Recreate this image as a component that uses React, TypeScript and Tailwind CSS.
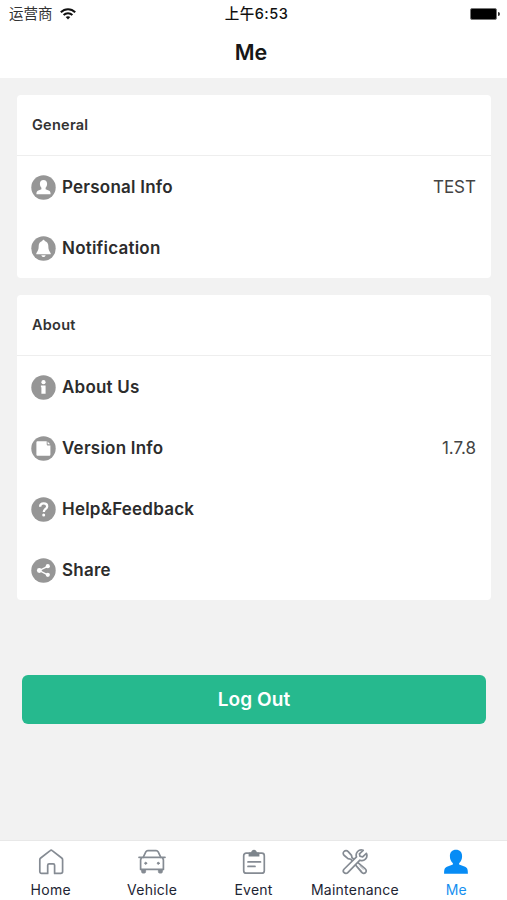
import React from 'react';

interface RowProps {
  icon: React.ReactNode;
  label: string;
  value?: string;
}

interface SectionProps {
  title: string;
  children: React.ReactNode;
}

interface TabProps {
  icon: React.ReactNode;
  label: string;
  active?: boolean;
}

const RoundIcon = ({ children }: { children: React.ReactNode }) => (
  <svg width="25" height="25" viewBox="0 0 25 25" fill="none" className="mt-px shrink-0">
    <circle cx="12.5" cy="12.5" r="12.2" fill="#969696" />
    {children}
  </svg>
);

const PersonIcon = () => (
  <RoundIcon>
    <path d="M12.5 5c-2.3 0-3.6 1.6-3.6 3.8 0 1.8.6 3.1 1.5 3.9v1.5l-3.6 1.5c-1 .5-1.4 1.3-1.4 3.6h14.2c0-2.3-.4-3.1-1.4-3.6l-3.6-1.5v-1.5c.9-.8 1.5-2.1 1.5-3.9 0-2.2-1.3-3.8-3.6-3.8Z" fill="#fff" />
  </RoundIcon>
);

const BellIcon = () => (
  <RoundIcon>
    <path d="M12.5 3.8c-.7 0-1.1.4-1.2 1.1-2.3.6-3.6 2.4-3.6 4.9 0 3.6-.8 5.3-2.4 7.4v1h14.4v-1c-1.6-2.1-2.4-3.8-2.4-7.4 0-2.5-1.3-4.3-3.6-4.9-.1-.7-.5-1.1-1.2-1.1Z" fill="#fff" />
    <path d="M10.4 19.2h4.2c-.2 1.2-1 1.8-2.1 1.8s-1.9-.6-2.1-1.8Z" fill="#fff" />
  </RoundIcon>
);

const InfoIcon = () => (
  <RoundIcon>
    <circle cx="12.5" cy="7.2" r="2.1" fill="#fff" />
    <path d="M9.9 10.6h4.7v8.2h-4.2v-6.5h-.5v-1.7Z" fill="#fff" />
  </RoundIcon>
);

const PageIcon = () => (
  <RoundIcon>
    <path d="M6.8 5.3h8.9v2.6c0 1 .5 1.5 1.5 1.5h2.2v9c0 .9-.5 1.4-1.4 1.4H6.8c-.9 0-1.4-.5-1.4-1.4V6.7c0-.9.5-1.4 1.4-1.4Z" fill="#fff" />
    <path d="m16.6 5.6 2.5 2.6h-2.5V5.6Z" fill="#fff" />
  </RoundIcon>
);

const QuestionIcon = () => (
  <RoundIcon>
    <path d="M9.1 9.8c0-2.2 1.4-3.4 3.6-3.4s3.5 1.2 3.5 3c0 2.5-3.4 2.6-3.4 5.5" stroke="#fff" strokeWidth="2.3" />
    <circle cx="12.7" cy="18.1" r="1.5" fill="#fff" />
  </RoundIcon>
);

const ShareIcon = () => (
  <RoundIcon>
    <path d="m16.7 8.3-8.3 4.2 8.3 4.3" stroke="#fff" strokeWidth="1.4" />
    <circle cx="8.3" cy="12.5" r="2.4" fill="#fff" />
    <circle cx="16.8" cy="8.2" r="2.1" fill="#fff" />
    <circle cx="16.8" cy="16.8" r="2.1" fill="#fff" />
  </RoundIcon>
);

const TabSvg = ({ children }: { children: React.ReactNode }) => (
  <svg width="28" height="26" viewBox="0 0 28 26" fill="none" stroke="#858b93" strokeWidth="1.7" strokeLinecap="round" strokeLinejoin="round">
    {children}
  </svg>
);

const HomeIcon = () => (
  <TabSvg>
    <path d="M13.2 1.6c.6-.5 1.4-.5 2 0l9.5 7.4c.6.5.9 1 .9 1.8v11.8c0 1.1-.7 1.8-1.8 1.8h-6.2v-8.1c0-.9-.5-1.4-1.4-1.4h-4.1c-.9 0-1.4.5-1.4 1.4v8.1H4.6c-1.1 0-1.8-.7-1.8-1.8V10.8c0-.8.3-1.3.9-1.8l9.5-7.4Z" />
  </TabSvg>
);

const VehicleIcon = () => (
  <TabSvg>
    <path d="m5.2 8.3 2.6-5.4c.5-.9 1.1-1.3 2-1.3h8.4c.9 0 1.5.4 2 1.3l2.6 5.4M1 8.3h2.5M24.5 8.3H27" />
    <path d="M4.8 8.3h18.4c1.5.5 2.2 1.5 2.2 3v9.1H2.6v-9.1c0-1.5.7-2.5 2.2-3Z" />
    <path d="M3.600 20.8h4v1.900c0 .9-.5 1.400-1.300 1.400H4.900c-.8 0-1.300-.5-1.300-1.400v-1.900ZM20.400 20.8h4v1.900c0 .9-.5 1.400-1.300 1.400h-1.400c-.8 0-1.300-.5-1.300-1.400v-1.900Z" fill="#858b93" strokeWidth=".8" />
    <circle cx="7.7" cy="14.3" r="1" fill="#858b93" strokeWidth="1" />
    <circle cx="20.3" cy="14.3" r="1" fill="#858b93" strokeWidth="1" />
  </TabSvg>
);

const EventIcon = () => (
  <TabSvg>
    <rect x="3.7" y="4.2" width="20.6" height="20" rx="2.5" />
    <path d="M8.6 7.4V5c0-.9.6-1.4 1.5-1.4h1C11.5 1.8 12.5.8 14 .8s2.5 1 2.9 2.8h1c.9 0 1.5.5 1.5 1.4v2.4H8.6Z" fill="#7d858c" stroke="none" />
    <path d="M8 12.9h12.5M8 17.4h7" />
  </TabSvg>
);

const MaintenanceIcon = () => (
  <TabSvg>
    <path d="M3 2.5c1.2-1.2 2.9-1.2 4.2.1l3.3 3.8.5 2.3 13 10.9c1.5 1.3 1.6 2.9.5 4s-2.7 1-4-.5L9.8 10.3 7 9.6 3.3 6.5C1.9 5.3 1.9 3.6 3 2.5Z" />
    <path d="M22.2 1.3c-2-.7-4.2-.2-5.6 1.2-1.4 1.5-1.8 3.5-1.1 5.4L3.2 20c-1.1 1.1-1.1 2.7-.1 3.7s2.6 1 3.7-.1L18.9 11.2c2 .8 4.1.3 5.5-1.1 1.5-1.5 1.9-3.7 1-5.7l-3.7 3.5-2.7-.7-.6-2.4 3.8-3.5Z" fill="#fff" />
    <path d="m18.7 17 3.5 3.5M17.2 18.5l3.5 3.5" strokeWidth=".6" />
  </TabSvg>
);

const MeIcon = () => (
  <svg width="28" height="26" viewBox="0 0 28 26" fill="#078cf5">
    <path d="M14 .8c-3.9 0-6.1 2.5-6.1 6.2 0 3 .9 5.5 3 7.2v1.4l-6 2.2c-2.3 1-2.8 2.7-2.8 7h23.8c0-4.3-.5-6-2.8-7l-6-2.2v-1.4c2.1-1.700 3-4.200 3-7.200 0-3.700-2.200-6.200-6.100-6.200Z" />
  </svg>
);

const Row = ({ icon, label, value }: RowProps) => (
  <div className="flex h-[61px] items-center pr-[15px] pl-[14px]">
    {icon}
    <span className="ml-[6px] pt-[2px] text-[17px] font-semibold tracking-[0.22px] text-[#2c2c2c]">{label}</span>
    {value && <span className="ml-auto pt-[2px] text-[17px] text-[#444]">{value}</span>}
  </div>
);

const Section = ({ title, children }: SectionProps) => (
  <section className="rounded-[4px] bg-white">
    <div className="flex h-[61px] items-center border-b border-[#eee] pl-[15px]">
      <h2 className="text-[14.5px] font-semibold tracking-[0.25px] text-[#333]">{title}</h2>
    </div>
    {children}
  </section>
);

const Tab = ({ icon, label, active }: TabProps) => (
  <div className={`flex flex-1 flex-col items-center pt-[8px] ${active ? 'text-[#168ff0]' : 'text-[#1d2433]'}`}>
    {icon}
    <span className="mt-[5px] text-[14px] leading-5 tracking-[0.25px]">{label}</span>
  </div>
);

const App = () => {
  return (
    <div className="flex h-[900px] w-[507px] flex-col overflow-hidden bg-[#f2f2f2] font-['Inter','Noto_Sans_CJK_SC',sans-serif]">
      <header className="h-[78px] bg-white">
        <div className="grid h-[28px] grid-cols-3 items-center pr-[7px] pl-[9px] text-[14.5px] leading-none text-[#111]">
          <div className="flex items-center gap-[7px]">
            <span className="text-[#333]">运营商</span>
            <svg width="16" height="12" viewBox="0 0 16 12" fill="none" stroke="#111" strokeWidth="2">
              <path d="M.8 4.3C4.9.2 11.1.2 15.2 4.3M3.6 7c2.5-2.4 6.3-2.4 8.8 0" />
              <path d="M5.7 9.1c1.4-1.2 3.2-1.2 4.6 0L8 11.5 5.7 9.1Z" fill="#111" stroke="none" />
            </svg>
          </div>
          <span className="pl-[4px] text-center font-medium tracking-[0.5px]">上午6:53</span>
          <div className="flex items-center justify-end gap-px">
            <span className="h-[12px] w-[27px] rounded-[2px] border border-[#777] bg-black" />
            <span className="h-[4px] w-[2px] rounded-r-full bg-[#333]" />
          </div>
        </div>
        <h1 className="flex h-[48px] items-center justify-center pr-[5px] text-[21.5px] font-semibold text-[#171717]">Me</h1>
      </header>

      <main className="flex flex-1 flex-col gap-[17px] pt-[17px] pr-[16px] pl-[17px]">
        <Section title="General">
          <Row icon={<PersonIcon />} label="Personal Info" value="TEST" />
          <Row icon={<BellIcon />} label="Notification" />
        </Section>
        <Section title="About">
          <Row icon={<InfoIcon />} label="About Us" />
          <Row icon={<PageIcon />} label="Version Info" value="1.7.8" />
          <Row icon={<QuestionIcon />} label="Help&Feedback" />
          <Row icon={<ShareIcon />} label="Share" />
        </Section>
        <button className="mx-[5px] mt-[58px] h-[49px] rounded-[6px] bg-[#26b98e] pt-px text-[19px] font-semibold tracking-[0.1px] text-white">
          Log Out
        </button>
      </main>

      <nav className="flex h-[60px] border-t border-[#e8e8e8] bg-white">
        <Tab icon={<HomeIcon />} label="Home" />
        <Tab icon={<VehicleIcon />} label="Vehicle" />
        <Tab icon={<EventIcon />} label="Event" />
        <Tab icon={<MaintenanceIcon />} label="Maintenance" />
        <Tab icon={<MeIcon />} label="Me" active />
      </nav>
    </div>
  );
};

export default App;
